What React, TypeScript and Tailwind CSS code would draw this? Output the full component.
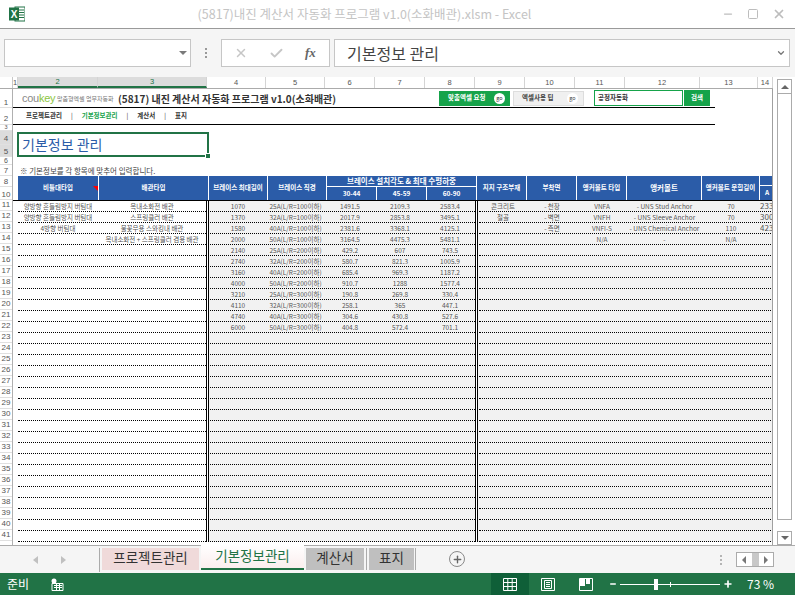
import { Minus, Plus, Square, X, Check, ChevronDown } from "lucide-react";

const KR = "font-['Noto_Sans_CJK_KR','Noto_Sans',sans-serif]";
const NUM = "font-['Liberation_Sans',sans-serif]";

const colHeads = [
  ["1", "w-[5px]"],
  ["2", "w-[80px]"],
  ["3", "w-[109px]"],
  ["4", "w-[59px]"],
  ["5", "w-[59px]"],
  ["6", "w-[50px]"],
  ["7", "w-[50px]"],
  ["8", "w-[50px]"],
  ["9", "w-[50px]"],
  ["10", "w-[50px]"],
  ["11", "w-[50px]"],
  ["12", "w-[75px]"],
  ["13", "w-[58px]"],
  ["14", "w-[15px]"],
];

const topRows = [
  ["1", "h-[19px] text-[8px]"],
  ["2", "h-[17px] text-[8px] pb-[1px]"],
  ["3", "h-[6px] text-[5.5px]"],
  ["4", "h-[14px] text-[8px] pb-[1px]"],
  ["5", "h-[12px] text-[8px]"],
  ["6", "h-[8px] text-[7px]"],
  ["7", "h-[11px] text-[8px]"],
  ["8", "h-[11px] text-[8px]"],
  ["10", "h-[13px] text-[8px]"],
];

const rowNums = Array.from({ length: 31 }, (_, i) => String(i + 11));

const left = [
  ["양방향 흔들림방지 버팀대", "옥내소화전 배관"],
  ["양방향 흔들림방지 버팀대", "스프링클러 배관"],
  ["4방향 버팀대", "불꽃무용 스와킹내 배관"],
  ["", "옥내소화전 + 스프링클러 겸용 배관"],
];

const mid = [
  ["1070", "25A(L/R=100이하)", "1491.5", "2109.3", "2583.4"],
  ["1370", "32A(L/R=100이하)", "2017.9", "2853.8", "3495.1"],
  ["1580", "40A(L/R=100이하)", "2381.6", "3368.1", "4125.1"],
  ["2000", "50A(L/R=100이하)", "3164.5", "4475.3", "5481.1"],
  ["2140", "25A(L/R=200이하)", "429.2", "607", "743.5"],
  ["2740", "32A(L/R=200이하)", "580.7", "821.3", "1005.9"],
  ["3160", "40A(L/R=200이하)", "685.4", "969.3", "1187.2"],
  ["4000", "50A(L/R=200이하)", "910.7", "1288", "1577.4"],
  ["3210", "25A(L/R=300이하)", "190.8", "269.8", "330.4"],
  ["4110", "32A(L/R=300이하)", "258.1", "365", "447.1"],
  ["4740", "40A(L/R=300이하)", "304.6", "430.8", "527.6"],
  ["6000", "50A(L/R=300이하)", "404.8", "572.4", "701.1"],
];

const right = [
  ["콘크리트", "- 천장", "VNFA", "- UNS Stud Anchor", "70", "233"],
  ["철골", "- 벽면", "VNFH", "- UNS Sleeve Anchor", "70", "300"],
  ["", "- 측면", "VNFI-S", "- UNS Chemical Anchor", "110", "423"],
  ["", "", "N/A", "-", "N/A", ""],
];

function Cell({ w, children, className = "" }: { w: string; children?: React.ReactNode; className?: string }) {
  return (
    <div className={`${w} shrink-0 flex items-center justify-center whitespace-nowrap overflow-hidden text-[6.5px] leading-none text-[#555555] ${className}`}>
      {children}
    </div>
  );
}

function HeadCell({ w, children }: { w: string; children: React.ReactNode }) {
  return (
    <div className={`${w} shrink-0 flex items-center justify-center bg-[#2b5ca8] text-white font-bold text-[6.5px] whitespace-nowrap overflow-hidden`}>
      {children}
    </div>
  );
}

function DataRow({ i }: { i: number }) {
  const l = left[i] ?? ["", ""];
  const m = mid[i] ?? ["", "", "", "", ""];
  const r = right[i] ?? ["", "", "", "", "", ""];
  return (
    <div className="flex h-[11px]">
      <div className="w-[5px] shrink-0" />
      <div className="flex w-[188px] shrink-0 border-b border-dotted border-black">
        <Cell w="w-[80px]">{l[0]}</Cell>
        <Cell w="w-[108px]">{l[1]}</Cell>
      </div>
      <div className="flex w-[3px] shrink-0 border-x border-black bg-white" />
      <div className="flex flex-1 bg-[#f2f2f2]">
        <div className="flex w-[265px] ml-[1px] shrink-0 border-b border-dotted border-black">
          <Cell w="w-[56px]">{m[0]}</Cell>
          <Cell w="w-[59px]">{m[1]}</Cell>
          <Cell w="w-[50px]">{m[2]}</Cell>
          <Cell w="w-[50px]">{m[3]}</Cell>
          <Cell w="w-[50px]">{m[4]}</Cell>
        </div>
        <div className="w-[3px] shrink-0 border-x border-black bg-white" />
        <div className="flex flex-1 ml-[1px] border-b border-dotted border-black">
          <Cell w="w-[48px]">{r[0]}</Cell>
          <Cell w="w-[50px]">{r[1]}</Cell>
          <Cell w="w-[50px]">{r[2]}</Cell>
          <Cell w="w-[75px]">{r[3]}</Cell>
          <Cell w="w-[58px]">{r[4]}</Cell>
          <Cell w="w-[15px]" className="justify-start text-[8px] text-[#1f3b6f]">{r[5]}</Cell>
        </div>
      </div>
    </div>
  );
}

function Banner() {
  return (
    <div className="flex h-[19px] items-center border-b border-black w-[702px]">
      <span className="ml-[9px] w-[32px] text-[11px] font-['Liberation_Sans',sans-serif] text-[#8a8a8a] tracking-tight">
        cou<span className="text-[#8cc63f]">key</span>
      </span>
      <span className="ml-[3px] w-[58px] text-[6px] text-[#777777] whitespace-nowrap">맞춤형엑셀 업무자동화</span>
      <span className="ml-[3px] text-[10px] font-bold text-[#333333] whitespace-nowrap">(5817) 내진 계산서 자동화 프로그램 v1.0(소화배관)</span>
      <div className="ml-auto flex items-center mr-[5px]">
        <div className="flex w-[71px] h-[15px] items-center justify-between bg-[#16a34a] pl-[9px] pr-[5px] mr-[3px]">
          <span className="text-[6.5px] font-bold text-white">맞춤엑셀 요청</span>
          <span className="flex w-[11px] h-[11px] items-center justify-center rounded-full bg-white text-[5.5px] text-[#333333]">go</span>
        </div>
        <div className="flex w-[71px] h-[15px] items-center justify-between bg-[#f0f0f0] border border-[#dddddd] pl-[8px] pr-[5px] mr-[10px]">
          <span className="text-[6.5px] font-bold text-[#444444]">엑셀사용 팁</span>
          <span className="flex w-[11px] h-[11px] items-center justify-center rounded-full bg-white text-[5.5px] text-[#444444]">go</span>
        </div>
        <div className="flex w-[89px] h-[16px] items-center border border-[#16a34a] pl-[3px] text-[6.5px] font-bold text-[#333333]">공정자동화</div>
        <div className="flex w-[26px] h-[16px] ml-[1px] items-center justify-center bg-[#16a34a] text-[6.5px] font-bold text-white">검색</div>
      </div>
    </div>
  );
}

function Nav() {
  return (
    <div className="flex h-[17px] w-[702px] items-center border-b border-black pl-[13px] gap-[9px] text-[6.5px] font-bold text-[#333333]">
      <span>프로젝트관리</span>
      <span className="font-normal">|</span>
      <span className="text-[#16a34a]">기본정보관리</span>
      <span className="font-normal">|</span>
      <span>계산서</span>
      <span className="font-normal">|</span>
      <span>표지</span>
    </div>
  );
}

function TableHead() {
  return (
    <div className="flex h-[24px] gap-[1px] bg-white pl-[5px] border-b border-black box-content">
      <HeadCell w="w-[80px] relative">
        비틀대타입
        <span className="absolute right-0 top-[10px] h-0 w-0 border-l-[5px] border-t-[5px] border-l-transparent border-t-[#ff0000]" />
      </HeadCell>
      <HeadCell w="w-[109px]">배관타입</HeadCell>
      <HeadCell w="w-[58px]">브레이스 최대길이</HeadCell>
      <HeadCell w="w-[58px]">브레이스 직경</HeadCell>
      <div className="flex w-[149px] shrink-0 flex-col gap-[1px]">
        <div className="flex h-[10px] items-center justify-center bg-[#2b5ca8] text-[7.5px] font-bold text-white">브레이스 설치각도 &amp; 최대 수평하중</div>
        <div className="flex flex-1 gap-[1px]">
          <HeadCell w="w-[49px]">30-44</HeadCell>
          <HeadCell w="w-[49px]">45-59</HeadCell>
          <HeadCell w="w-[49px]">60-90</HeadCell>
        </div>
      </div>
      <HeadCell w="w-[49px]">지지 구조부재</HeadCell>
      <HeadCell w="w-[49px]">부착면</HeadCell>
      <HeadCell w="w-[49px]">앵커볼트 타입</HeadCell>
      <HeadCell w="w-[74px]"><span className="text-[7.5px]">앵커볼트</span></HeadCell>
      <HeadCell w="w-[57px]">앵커볼트 문힘길이</HeadCell>
      <div className="flex w-[14px] shrink-0 flex-col gap-[1px]">
        <div className="h-[9px] bg-[#2b5ca8]" />
        <HeadCell w="flex-1">A</HeadCell>
      </div>
    </div>
  );
}

function Sheet() {
  return (
    <div className={`flex h-[457px] overflow-hidden border-t border-[#ababab] ${NUM}`}>
      <div className="w-[13px] shrink-0 bg-white border-r border-[#b0b0b0]">
        {topRows.map(([n, h]) => (
          <div
            key={n}
            className={`${h} flex items-end justify-center overflow-hidden border-b border-[#e0e0e0] leading-none text-[#555555] ${n === "4" || n === "5" ? "bg-[#dcdcdc] text-[#217346]" : ""}`}
          >
            {n}
          </div>
        ))}
        {rowNums.map((n) => (
          <div key={n} className="flex h-[11px] items-center justify-center border-b border-[#e0e0e0] text-[8px] leading-none text-[#555555]">
            {n}
          </div>
        ))}
      </div>
      <div className={`w-[760px] shrink-0 overflow-hidden border-r border-[#a0a0a0] ${KR}`}>
        <Banner />
        <Nav />
        <div className="h-[6px]" />
        <div className="relative ml-[4px] mt-[1px] flex h-[25px] w-[192px] items-center border-2 border-[#217346] pl-[3px] pb-[2px] text-[14px] leading-none text-[#2b5ca8]">
          기본정보 관리
          <span className="absolute right-[-4px] bottom-[-4px] h-[6px] w-[6px] border border-white bg-[#217346]" />
        </div>
        <div className="h-[8px]" />
        <div className="flex h-[11px] items-center pl-[7px] text-[7.5px] leading-none text-[#444444]">※ 기본정보를 각 항목에 맞추어 입력합니다.</div>
        <TableHead />
        {rowNums.map((n, i) => (
          <DataRow key={n} i={i} />
        ))}
      </div>
    </div>
  );
}

export default function App() {
  return (
    <div className={`flex h-[595px] w-[795px] flex-col overflow-hidden bg-white ${KR}`}>
      {/* title bar */}
      <div className="flex h-[29px] shrink-0 items-center border-b border-[#9a9a9a] pl-[9px] pr-[9px]">
        <svg width="16" height="16" viewBox="0 0 16 16">
          <rect x="6" y="1" width="10" height="14" fill="#fff" stroke="#217346" />
          <path d="M10 4h5M10 6.5h5M10 9h5M10 11.5h5" stroke="#217346" />
          <rect x="0" y="1.5" width="10" height="13" fill="#217346" />
          <text x="5" y="12" textAnchor="middle" fontSize="10" fontWeight="700" fill="#fff" fontFamily="Liberation Sans, sans-serif">X</text>
        </svg>
        <div className="flex-1 pr-[12px] text-center text-[12.5px] font-normal text-[#c4c4c4]">(5817)내진 계산서 자동화 프로그램 v1.0(소화배관).xlsm - Excel</div>
        <div className="ml-[6px] flex items-center gap-[13px] text-[#bdbdbd]">
          <Minus size={12} strokeWidth={2.5} />
          <Square size={12} strokeWidth={2} />
          <X size={14} strokeWidth={3} />
        </div>
      </div>

      {/* formula bar */}
      <div className="flex h-[48px] shrink-0 items-center bg-[#f5f5f5] pl-[4px] pr-[5px]">
        <div className="flex h-[28px] w-[187px] items-center justify-end border border-[#c6c6c6] bg-white pr-[3px]">
          <span className="border-x-[4px] border-t-[4px] border-x-transparent border-t-[#7a7a7a]" />
        </div>
        <div className="flex w-[30px] flex-col items-center gap-[2px]">
          <span className="h-[2px] w-[2px] bg-[#999999]" />
          <span className="h-[2px] w-[2px] bg-[#999999]" />
          <span className="h-[2px] w-[2px] bg-[#999999]" />
        </div>
        <div className="flex h-[28px] w-[109px] items-center gap-[21px] border border-[#c6c6c6] bg-white pl-[12px]">
          <X size={14} strokeWidth={2.5} className="text-[#c6c6c6]" />
          <Check size={15} strokeWidth={3} className="text-[#c6c6c6]" />
          <span className="font-['Liberation_Serif',serif] text-[13px] italic font-bold text-[#666666]">fx</span>
        </div>
        <div className="ml-[4px] flex h-[28px] flex-1 items-center justify-between border border-[#c6c6c6] bg-white pl-[12px] pr-[3px] text-[16px] text-[#444444]">
          기본정보 관리
          <ChevronDown size={10} strokeWidth={3} className="text-[#777777]" />
        </div>
      </div>

      {/* grid area with vertical scrollbar */}
      <div className="flex shrink-0">
        <div className="w-[773px] shrink-0">
          <div className={`flex h-[11px] bg-white ${NUM}`}>
            <div className="w-[13px] shrink-0 border-r border-[#c8c8c8]" />
            {colHeads.map(([n, w]) => (
              <div
                key={n}
                className={`${w} flex shrink-0 items-center justify-center border-r border-[#d4d4d4] text-[7.5px] leading-none ${n === "2" || n === "3" ? "border-b-2 border-b-[#217346] bg-[#dcdcdc] text-[#217346]" : "text-[#555555]"}`}
              >
                {n}
              </div>
            ))}
          </div>
          <Sheet />
        </div>
        <div className="flex w-[22px] shrink-0 flex-col pl-[4px] pt-[2px]">
          <div className="flex h-[15px] w-[15px] items-center justify-center border border-[#ababab]">
            <span className="border-x-[4px] border-b-[4px] border-x-transparent border-b-[#666666]" />
          </div>
          <div className="h-[426px] w-[15px] border-x border-b border-[#ababab]" />
          <div className="mt-[11px] flex h-[14px] w-[15px] items-center justify-center border border-[#ababab]">
            <span className="border-x-[4px] border-t-[4px] border-x-transparent border-t-[#666666]" />
          </div>
        </div>
      </div>

      {/* sheet tabs */}
      <div className="flex h-[28px] shrink-0 items-start border-t border-[#ababab] bg-[#f5f5f5] pr-[21px]">
        <div className="flex h-[24px] w-[100px] shrink-0 items-center justify-center gap-[23px] border-r border-[#ababab] mt-[2px]">
          <span className="border-y-[4px] border-r-[5px] border-y-transparent border-r-[#c0c0c0]" />
          <span className="border-y-[4px] border-l-[5px] border-y-transparent border-l-[#c0c0c0]" />
        </div>
        <div className="ml-[2px] mt-[2px] flex h-[22px] w-[97px] items-center justify-center bg-[#f0dada] pb-[2px] text-[13.5px] leading-none text-[#333333]">프로젝트관리</div>
        <div className="relative top-[-1px] mx-[2px] flex h-[25px] w-[103px] items-center justify-center border-b-2 border-b-[#217346] bg-gradient-to-b from-white to-[#fbeeee] pb-[2px] text-[13.5px] leading-none text-[#217346]">기본정보관리</div>
        <div className="mt-[2px] flex h-[22px] w-[58px] items-center justify-center bg-[#bfbfbf] pb-[2px] text-[13.5px] leading-none text-[#333333]">계산서</div>
        <div className="mx-[2px] mt-[2px] h-[22px] w-px bg-[#ababab]" />
        <div className="mt-[2px] flex h-[22px] w-[45px] items-center justify-center bg-[#bfbfbf] pb-[2px] text-[13.5px] leading-none text-[#333333]">표지</div>
        <div className="ml-[1px] mt-[2px] h-[22px] w-px bg-[#ababab]" />
        <div className="ml-[33px] mt-[5px] flex h-[16px] w-[16px] items-center justify-center rounded-full border border-[#8a8a8a] text-[#666666]">
          <Plus size={11} strokeWidth={3} />
        </div>
        <div className="ml-auto mt-[6px] flex items-center">
          <div className="mr-[14px] flex flex-col gap-[2px]">
            <span className="h-[2px] w-[2px] bg-[#b5b5b5]" />
            <span className="h-[2px] w-[2px] bg-[#b5b5b5]" />
            <span className="h-[2px] w-[2px] bg-[#b5b5b5]" />
          </div>
          <div className="flex h-[15px] w-[38px] items-center border border-[#ababab] bg-white">
            <span className="flex flex-1 justify-center"><span className="border-y-[4px] border-r-[4px] border-y-transparent border-r-[#777777]" /></span>
            <span className="h-full w-[7px] bg-[#c8c8c8]" />
            <span className="flex flex-1 justify-center"><span className="border-y-[4px] border-l-[4px] border-y-transparent border-l-[#777777]" /></span>
          </div>
        </div>
      </div>

      {/* status bar */}
      <div className="flex h-[22px] shrink-0 items-center bg-[#217346] pl-[7px] text-white">
        <span className="text-[12px] leading-none">준비</span>
        <svg className="ml-[22px]" width="13" height="13" viewBox="0 0 13 13" fill="none" stroke="#fff">
          <circle cx="3" cy="3" r="2.5" fill="#fff" stroke="none" />
          <path d="M1 5.5h11v7H1zM3 7.5h8M3 9.5h8M5.5 6v6M8.5 6v6" />
        </svg>
        <div className="ml-auto flex h-full items-center">
          <div className="flex h-full w-[38px] items-center justify-center bg-[#0f5f38]">
            <svg width="14" height="13" viewBox="0 0 14 13" fill="none" stroke="#fff"><path d="M.5.5h13v12H.5zM.5 4.5h13M.5 8.5h13M4.8.5v12M9.2.5v12" /></svg>
          </div>
          <div className="flex h-full w-[38px] items-center justify-center">
            <svg width="14" height="13" viewBox="0 0 14 13" fill="none" stroke="#fff"><path d="M.5.5h13v12H.5zM3.5 2.5h7v8h-7zM5 4.5h4M5 6.5h4M5 8.5h4" /></svg>
          </div>
          <div className="flex h-full w-[38px] items-center justify-center">
            <svg width="14" height="13" viewBox="0 0 14 13" fill="none" stroke="#fff"><path d="M.5.5h13v12H.5z" /><path d="M1 1h5v7H1zM7 1h4v5H7z" fill="#fff" stroke="none" /></svg>
          </div>
          <Minus size={8} strokeWidth={4} className="ml-[4px]" />
          <div className="relative ml-[3px] flex h-[12px] w-[100px] items-center">
            <div className="h-px w-full bg-white" />
            <span className="absolute left-[34px] h-[11px] w-[4px] bg-white" />
            <span className="absolute left-[50px] h-[5px] w-px bg-white" />
          </div>
          <Plus size={10} strokeWidth={4} className="ml-[3px]" />
          <span className="ml-[14px] mr-[18px] w-[30px] whitespace-nowrap text-[12px] leading-none">73 %</span>
        </div>
      </div>
    </div>
  );
}
